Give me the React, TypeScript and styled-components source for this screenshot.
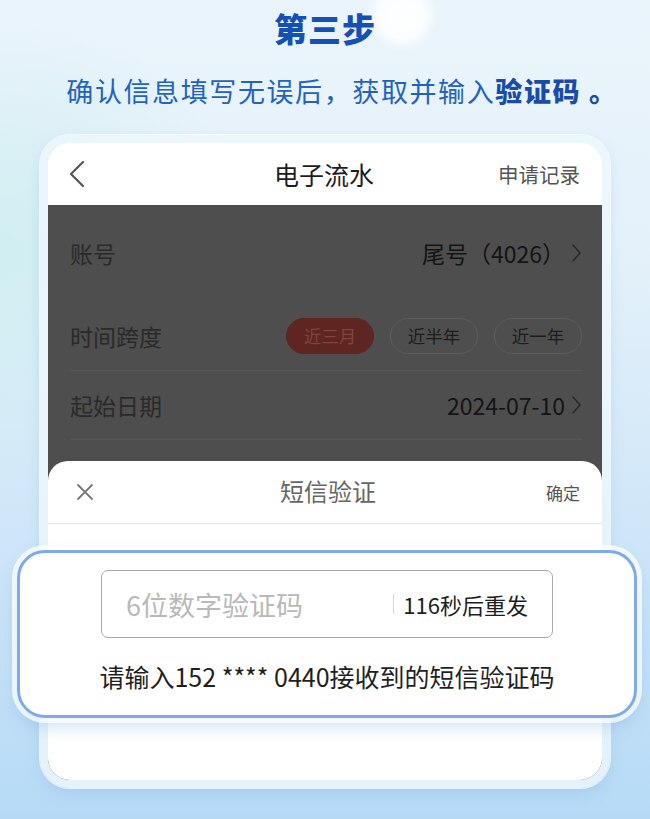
import React from "react";
import styled, { createGlobalStyle } from "styled-components";

const Global = createGlobalStyle`
  html, body { margin: 0; padding: 0; }
  body { font-family: "Noto Sans CJK SC", "Noto Sans", sans-serif; }
  * { box-sizing: border-box; }
`;

const Page = styled.div`
  position: relative;
  width: 650px;
  height: 819px;
  overflow: hidden;
  display: flex;
  flex-direction: column;
  align-items: center;
  background:
    radial-gradient(circle at 402px 16px, rgba(255,255,255,0.95) 0, rgba(255,255,255,0.85) 22px, rgba(255,255,255,0) 36px),
    radial-gradient(ellipse at 0px 250px, rgba(205,238,240,0.9) 0, rgba(205,238,240,0) 260px),
    linear-gradient(180deg, #eaf4fb 0%, #e4f1fa 30%, #cfe6f8 65%, #b6daf6 100%);
`;

const Title = styled.h1`
  margin: 8px 0 0;
  font-size: 33px;
  line-height: 40px;
  font-weight: 900;
  color: #1550b3;
  letter-spacing: 1px;
`;

const Subtitle = styled.p`
  margin: 24px 0 0;
  padding-left: 34px;
  font-size: 27px;
  line-height: 38px;
  color: #2462bf;
  letter-spacing: 1.6px;
  white-space: nowrap;
  strong { color: #1a4ba6; font-weight: 900; }
`;

const Period = styled.span`
  display: inline-block;
  margin-left: 8px;
  color: #1a4ba6;
  font-weight: 900;
`;

const Frame = styled.div`
  position: relative;
  margin-top: 25px;
  width: 570px;
  height: 653px;
  border-radius: 30px;
  padding: 8px;
  background: rgba(238, 248, 253, 0.8);
  box-shadow: 0 0 0 1px rgba(255,255,255,0.7), 0 6px 14px rgba(120, 170, 220, 0.25);
`;

const Card = styled.div`
  width: 100%;
  height: 100%;
  border-radius: 22px;
  overflow: hidden;
  background: #ffffff;
  display: flex;
  flex-direction: column;
`;

const NavBar = styled.div`
  height: 62px;
  flex-shrink: 0;
  display: grid;
  grid-template-columns: 1fr auto 1fr;
  align-items: center;
  padding: 0 22px 0 20px;
  background: #fff;
`;

const NavTitle = styled.div`
  font-size: 25px;
  color: #1d1d1d;
`;

const NavRight = styled.div`
  justify-self: end;
  font-size: 20.5px;
  color: #555;
`;

const Dim = styled.div`
  flex: 1;
  display: flex;
  flex-direction: column;
  background: #4e4e4e;
`;

const Row = styled.div<{ $h: number; $line?: boolean }>`
  height: ${(p) => p.$h}px;
  flex-shrink: 0;
  margin: 0 20px 0 22px;
  display: flex;
  align-items: center;
  justify-content: space-between;
  border-bottom: ${(p) => (p.$line ? "1px solid #575757" : "none")};
`;

const Label = styled.span`
  font-size: 23px;
  color: #2a2a2a;
`;

const Value = styled.span`
  display: flex;
  align-items: center;
  gap: 6px;
  font-size: 23px;
  color: #141414;
  font-family: "Noto Sans CJK SC", "Roboto", sans-serif;
`;

const Pills = styled.div`
  display: flex;
  gap: 16px;
`;

const Pill = styled.span<{ $active?: boolean }>`
  width: 88px;
  height: 36px;
  border-radius: 18px;
  display: flex;
  align-items: center;
  justify-content: center;
  font-size: 17.5px;
  color: ${(p) => (p.$active ? "#83433e" : "#1c1c1c")};
  background: ${(p) => (p.$active ? "#5e2521" : "transparent")};
  border: 1px solid ${(p) => (p.$active ? "#5e2521" : "#5c5c5c")};
`;

const Gap = styled.div`
  height: 21px;
  flex-shrink: 0;
`;

const Sheet = styled.div`
  flex: 1;
  background: #fff;
  border-radius: 20px 20px 0 0;
  display: flex;
  flex-direction: column;
`;

const SheetHead = styled.div`
  height: 63px;
  display: grid;
  grid-template-columns: 1fr auto 1fr;
  align-items: center;
  padding: 0 22px 0 28px;
  border-bottom: 1px solid #e6e6e6;
`;

const SheetTitle = styled.div`
  font-size: 24px;
  color: #666;
  margin-top: -4px;
`;

const SheetRight = styled.div`
  justify-self: end;
  font-size: 17px;
  color: #555;
`;

const Zoom = styled.div`
  position: absolute;
  left: -23px;
  top: 415px;
  width: 620px;
  height: 168px;
  border-radius: 28px;
  border: 3px solid #7eaaea;
  background: #fff;
  box-shadow: 0 0 0 5px rgba(255,255,255,0.75), 0 8px 18px rgba(90, 150, 220, 0.3);
  display: flex;
  flex-direction: column;
  align-items: center;
`;

const InputBox = styled.div`
  margin-top: 17px;
  width: 452px;
  height: 68px;
  border: 1.5px solid #a9a9a9;
  border-radius: 7px;
  display: flex;
  align-items: center;
  padding: 0 24px;
`;

const Placeholder = styled.span`
  flex: 1;
  font-size: 27px;
  color: #b9b9b9;
`;

const Sep = styled.span`
  width: 1px;
  height: 20px;
  background: #d6d6d6;
  margin-right: 9px;
`;

const Resend = styled.span`
  font-size: 22px;
  color: #1e1e1e;
`;

const Hint = styled.div`
  margin-top: 20px;
  font-size: 25px;
  color: #1f1f1f;
`;

const Back = () => (
  <svg width="18" height="28" viewBox="0 0 18 28">
    <path d="M15 2 L3 14 L15 26" fill="none" stroke="#555" strokeWidth="2.2" strokeLinecap="round" strokeLinejoin="round" />
  </svg>
);

const Chevron = () => (
  <svg width="11" height="20" viewBox="0 0 11 20">
    <path d="M2 2 L9 10 L2 18" fill="none" stroke="#2a2a2a" strokeWidth="1.6" strokeLinecap="round" strokeLinejoin="round" />
  </svg>
);

const Close = () => (
  <svg width="18" height="18" viewBox="0 0 18 18">
    <path d="M2 2 L16 16 M16 2 L2 16" fill="none" stroke="#777" strokeWidth="1.8" strokeLinecap="round" />
  </svg>
);

export default function App() {
  return (
    <Page>
      <Global />
      <Title>第三步</Title>
      <Subtitle>
        确认信息填写无误后，获取并输入<strong>验证码</strong>
        <Period>。</Period>
      </Subtitle>
      <Frame>
        <Card>
          <NavBar>
            <Back />
            <NavTitle>电子流水</NavTitle>
            <NavRight>申请记录</NavRight>
          </NavBar>
          <Dim>
            <Row $h={96}>
              <Label>账号</Label>
              <Value>
                尾号（4026）
                <Chevron />
              </Value>
            </Row>
            <Row $h={70} $line>
              <Label>时间跨度</Label>
              <Pills>
                <Pill $active>近三月</Pill>
                <Pill>近半年</Pill>
                <Pill>近一年</Pill>
              </Pills>
            </Row>
            <Row $h={69} $line>
              <Label>起始日期</Label>
              <Value>
                2024-07-10
                <Chevron />
              </Value>
            </Row>
            <Gap />
            <Sheet>
              <SheetHead>
                <Close />
                <SheetTitle>短信验证</SheetTitle>
                <SheetRight>确定</SheetRight>
              </SheetHead>
            </Sheet>
          </Dim>
        </Card>
        <Zoom>
          <InputBox>
            <Placeholder>6位数字验证码</Placeholder>
            <Sep />
            <Resend>116秒后重发</Resend>
          </InputBox>
          <Hint>请输入152 **** 0440接收到的短信验证码</Hint>
        </Zoom>
      </Frame>
    </Page>
  );
}
